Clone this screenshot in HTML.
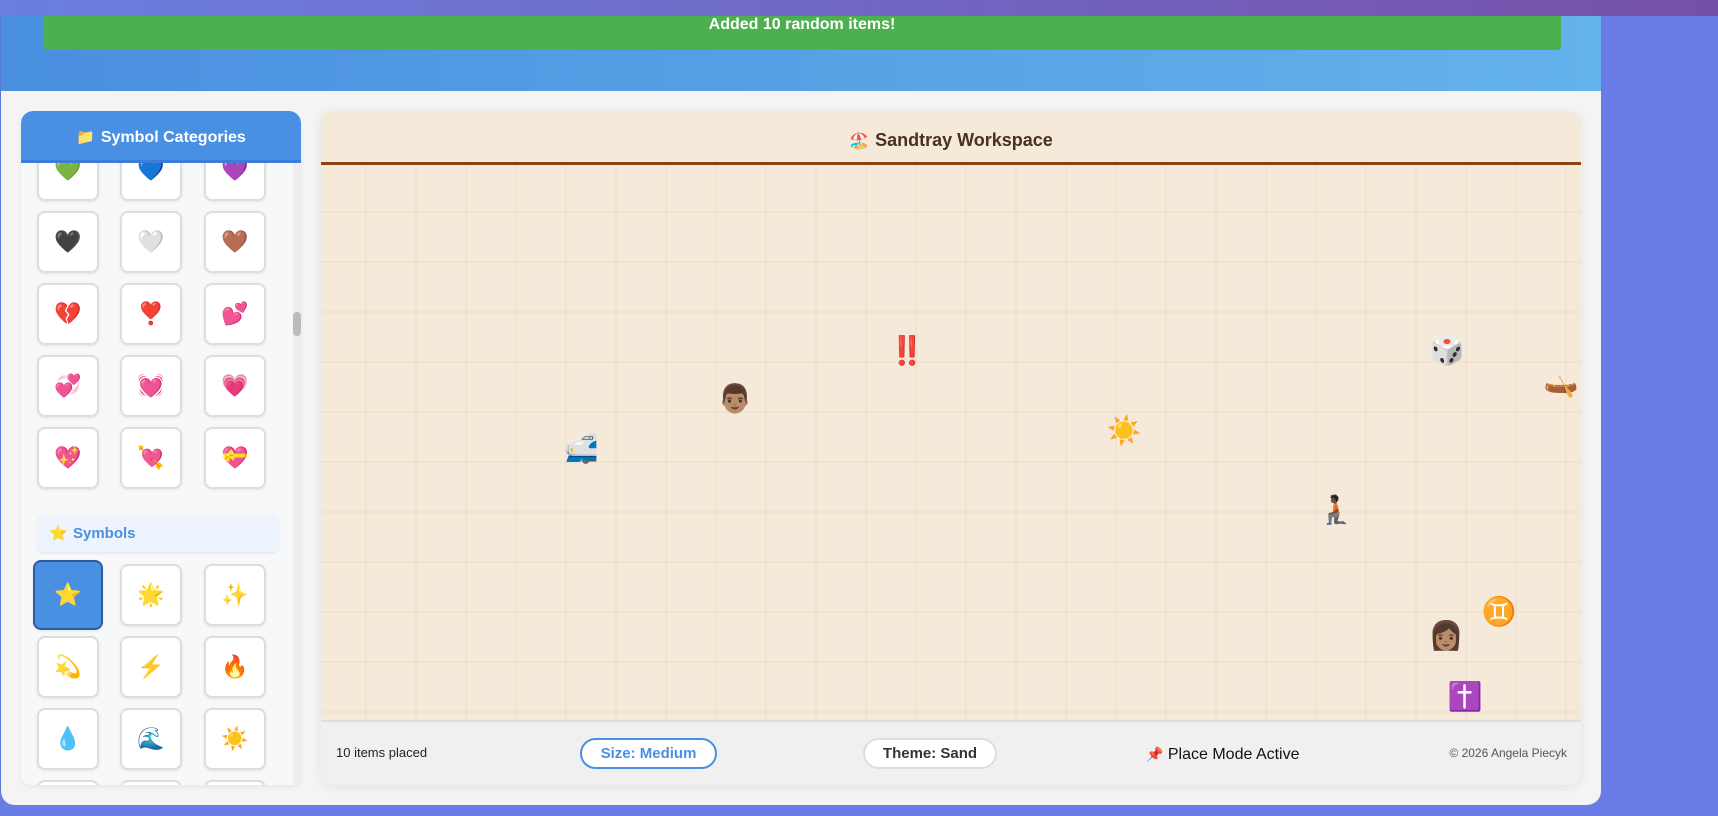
<!DOCTYPE html>
<html><head><meta charset="utf-8"><style>
*{box-sizing:border-box;margin:0;padding:0}
body{width:1718px;height:816px;overflow:hidden;background:#6a7de6;font-family:"Liberation Sans",sans-serif;position:relative}
.abs{position:absolute}
.topbar{left:0;top:0;width:1718px;height:16px;background:linear-gradient(90deg,#6b7fe0,#7650a8)}
.container{left:0;top:16px;width:1601px;height:789px;background:#f4f4f4;border-radius:0 0 14px 14px;overflow:hidden;border-left:1px solid #5a78d8}
.header{left:0;top:0;width:1601px;height:75px;background:linear-gradient(90deg,#4a8fe0,#64b2ea)}
.toast{left:42px;top:-4px;width:1518px;height:38px;background:#4caf50;border-radius:0 0 4px 4px;color:#fff;font-weight:bold;font-size:16px;text-align:center;line-height:26px}
.side{left:21px;top:111px;width:280px;height:674px;background:#f7f8fa;border-radius:12px 12px 10px 10px;overflow:hidden;box-shadow:0 2px 6px rgba(0,0,0,.06)}
.sidehead{left:0;top:0;width:280px;height:52px;background:#4a90e2;border-bottom:3px solid #3b7dd8;color:#fff;font-weight:bold;font-size:16px;text-align:center;line-height:54px;z-index:2;border-radius:12px 12px 0 0}
.tile{width:62px;height:62px;background:#fff;border:2px solid #ddd;border-radius:8px;display:flex;align-items:center;justify-content:center;box-shadow:0 1px 3px rgba(0,0,0,.08);font-size:22px}
.sel{background:#4a90e2;border:2px solid #2b5da0;width:70px;height:70px}
.scroll{left:272px;top:52px;width:8px;height:622px;background:#eee}
.thumb{left:272px;top:201px;width:8px;height:24px;background:#bbb;border-radius:4px}
.symh{left:16px;top:404px;width:242px;height:37px;background:#eef4fd;border-radius:6px;box-shadow:0 2px 2px rgba(0,0,0,.06);color:#4a90e2;font-weight:bold;font-size:15px;line-height:37px;padding-left:36px}
.ws{left:321px;top:111px;width:1260px;height:674px;border-radius:12px;overflow:hidden;background:#f0f0f0;box-shadow:0 2px 10px rgba(0,0,0,.08)}
.wshead{left:0;top:0;width:1260px;height:54px;background:#f5e9da;border-bottom:3px solid #8b4513;color:#4a3020;font-weight:bold;font-size:18px;text-align:center;line-height:58px}
.canvas{left:0;top:54px;width:1260px;height:557px;background-color:#f5e9da;background-image:linear-gradient(90deg,rgba(180,150,120,.08) 2px,transparent 2px),linear-gradient(rgba(180,150,120,.08) 2px,transparent 2px);background-size:50px 50px;background-position:-6px -4px;border-bottom:2px solid #ddd}
.foot{left:0;top:611px;width:1260px;height:63px;background:#f0f0f0;font-size:14px;color:#222}
.pill{top:16px;height:31px;border-radius:16px;background:#fff;font-weight:bold;font-size:15px;text-align:center;line-height:27px}
.it{position:absolute;font-size:28px;line-height:1;transform:translate(-50%,-50%)}
</style></head><body>
<div class="abs topbar"></div>
<div class="abs container">
 <div class="abs header"><div class="abs toast">Added 10 random items!</div></div>
</div>
<div class="abs side">
 <div class="abs sidehead"><span style="font-size:15px;margin-right:6px">📁</span>Symbol Categories</div>
 <div class="abs scroll"></div><div class="abs thumb"></div>
 <div id="tiles"></div>
 <div class="abs symh"><span style="position:absolute;left:12px;top:0;font-size:15px">⭐</span>Symbols</div>
</div>
<div class="abs ws">
 <div class="abs wshead"><span style="font-size:16px;margin-right:6px">🏖️</span>Sandtray Workspace</div>
 <div class="abs canvas">
  <div class="it" style="left:586px;top:186px">‼️</div>
  <div class="it" style="left:414px;top:234px">👨🏽</div>
  <div class="it" style="left:260px;top:284px">🚅</div>
  <div class="it" style="left:803px;top:266px">☀️</div>
  <div class="it" style="left:1126px;top:186px">🎲</div>
  <div class="it" style="left:1240px;top:218px">🛶</div>
  <div class="it" style="left:1015px;top:345px">🧎🏿</div>
  <div class="it" style="left:1178px;top:447px">♊</div>
  <div class="it" style="left:1125px;top:471px">👩🏽</div>
  <div class="it" style="left:1144px;top:532px">✝️</div>
 </div>
 <div class="abs foot">
  <div class="abs" style="left:15px;top:23px;font-size:13px">10 items placed</div>
  <div class="abs pill" style="left:259px;width:137px;border:2px solid #4a90e2;color:#4a90e2">Size: Medium</div>
  <div class="abs pill" style="left:542px;width:134px;border:2px solid #ddd;color:#333">Theme: Sand</div>
  <div class="abs" style="left:825px;top:24px;font-size:16px;color:#111"><span style="font-size:14px">📌</span> Place Mode Active</div>
  <div class="abs" style="right:14px;top:24px;font-size:12px;color:#555">© 2026 Angela Piecyk</div>
 </div>
</div>
<script>
var cols=[16,99,183],h='';
var rows=[28,100,172,244,316];
var hc=[['💚','💙','💜'],['🖤','🤍','🤎'],['💔','❣️','💕'],['💞','💓','💗'],['💖','💘','💝']];
rows.forEach(function(y,ri){cols.forEach(function(x,ci){h+='<div class="abs tile" style="left:'+x+'px;top:'+y+'px">'+hc[ri][ci]+'</div>';});});
var sy=[[453,['⭐','🌟','✨']],[525,['💫','⚡','🔥']],[597,['💧','🌊','☀️']],[669,['','','']]];
sy.forEach(function(r,ri){r[1].forEach(function(s,ci){var sel=(ri==0&&ci==0);var x=sel?12:cols[ci],y=sel?r[0]-4:r[0];h+='<div class="abs tile'+(sel?' sel':'')+'" style="left:'+x+'px;top:'+y+'px">'+s+'</div>';});});
document.getElementById('tiles').innerHTML=h;
</script>
</body></html>
